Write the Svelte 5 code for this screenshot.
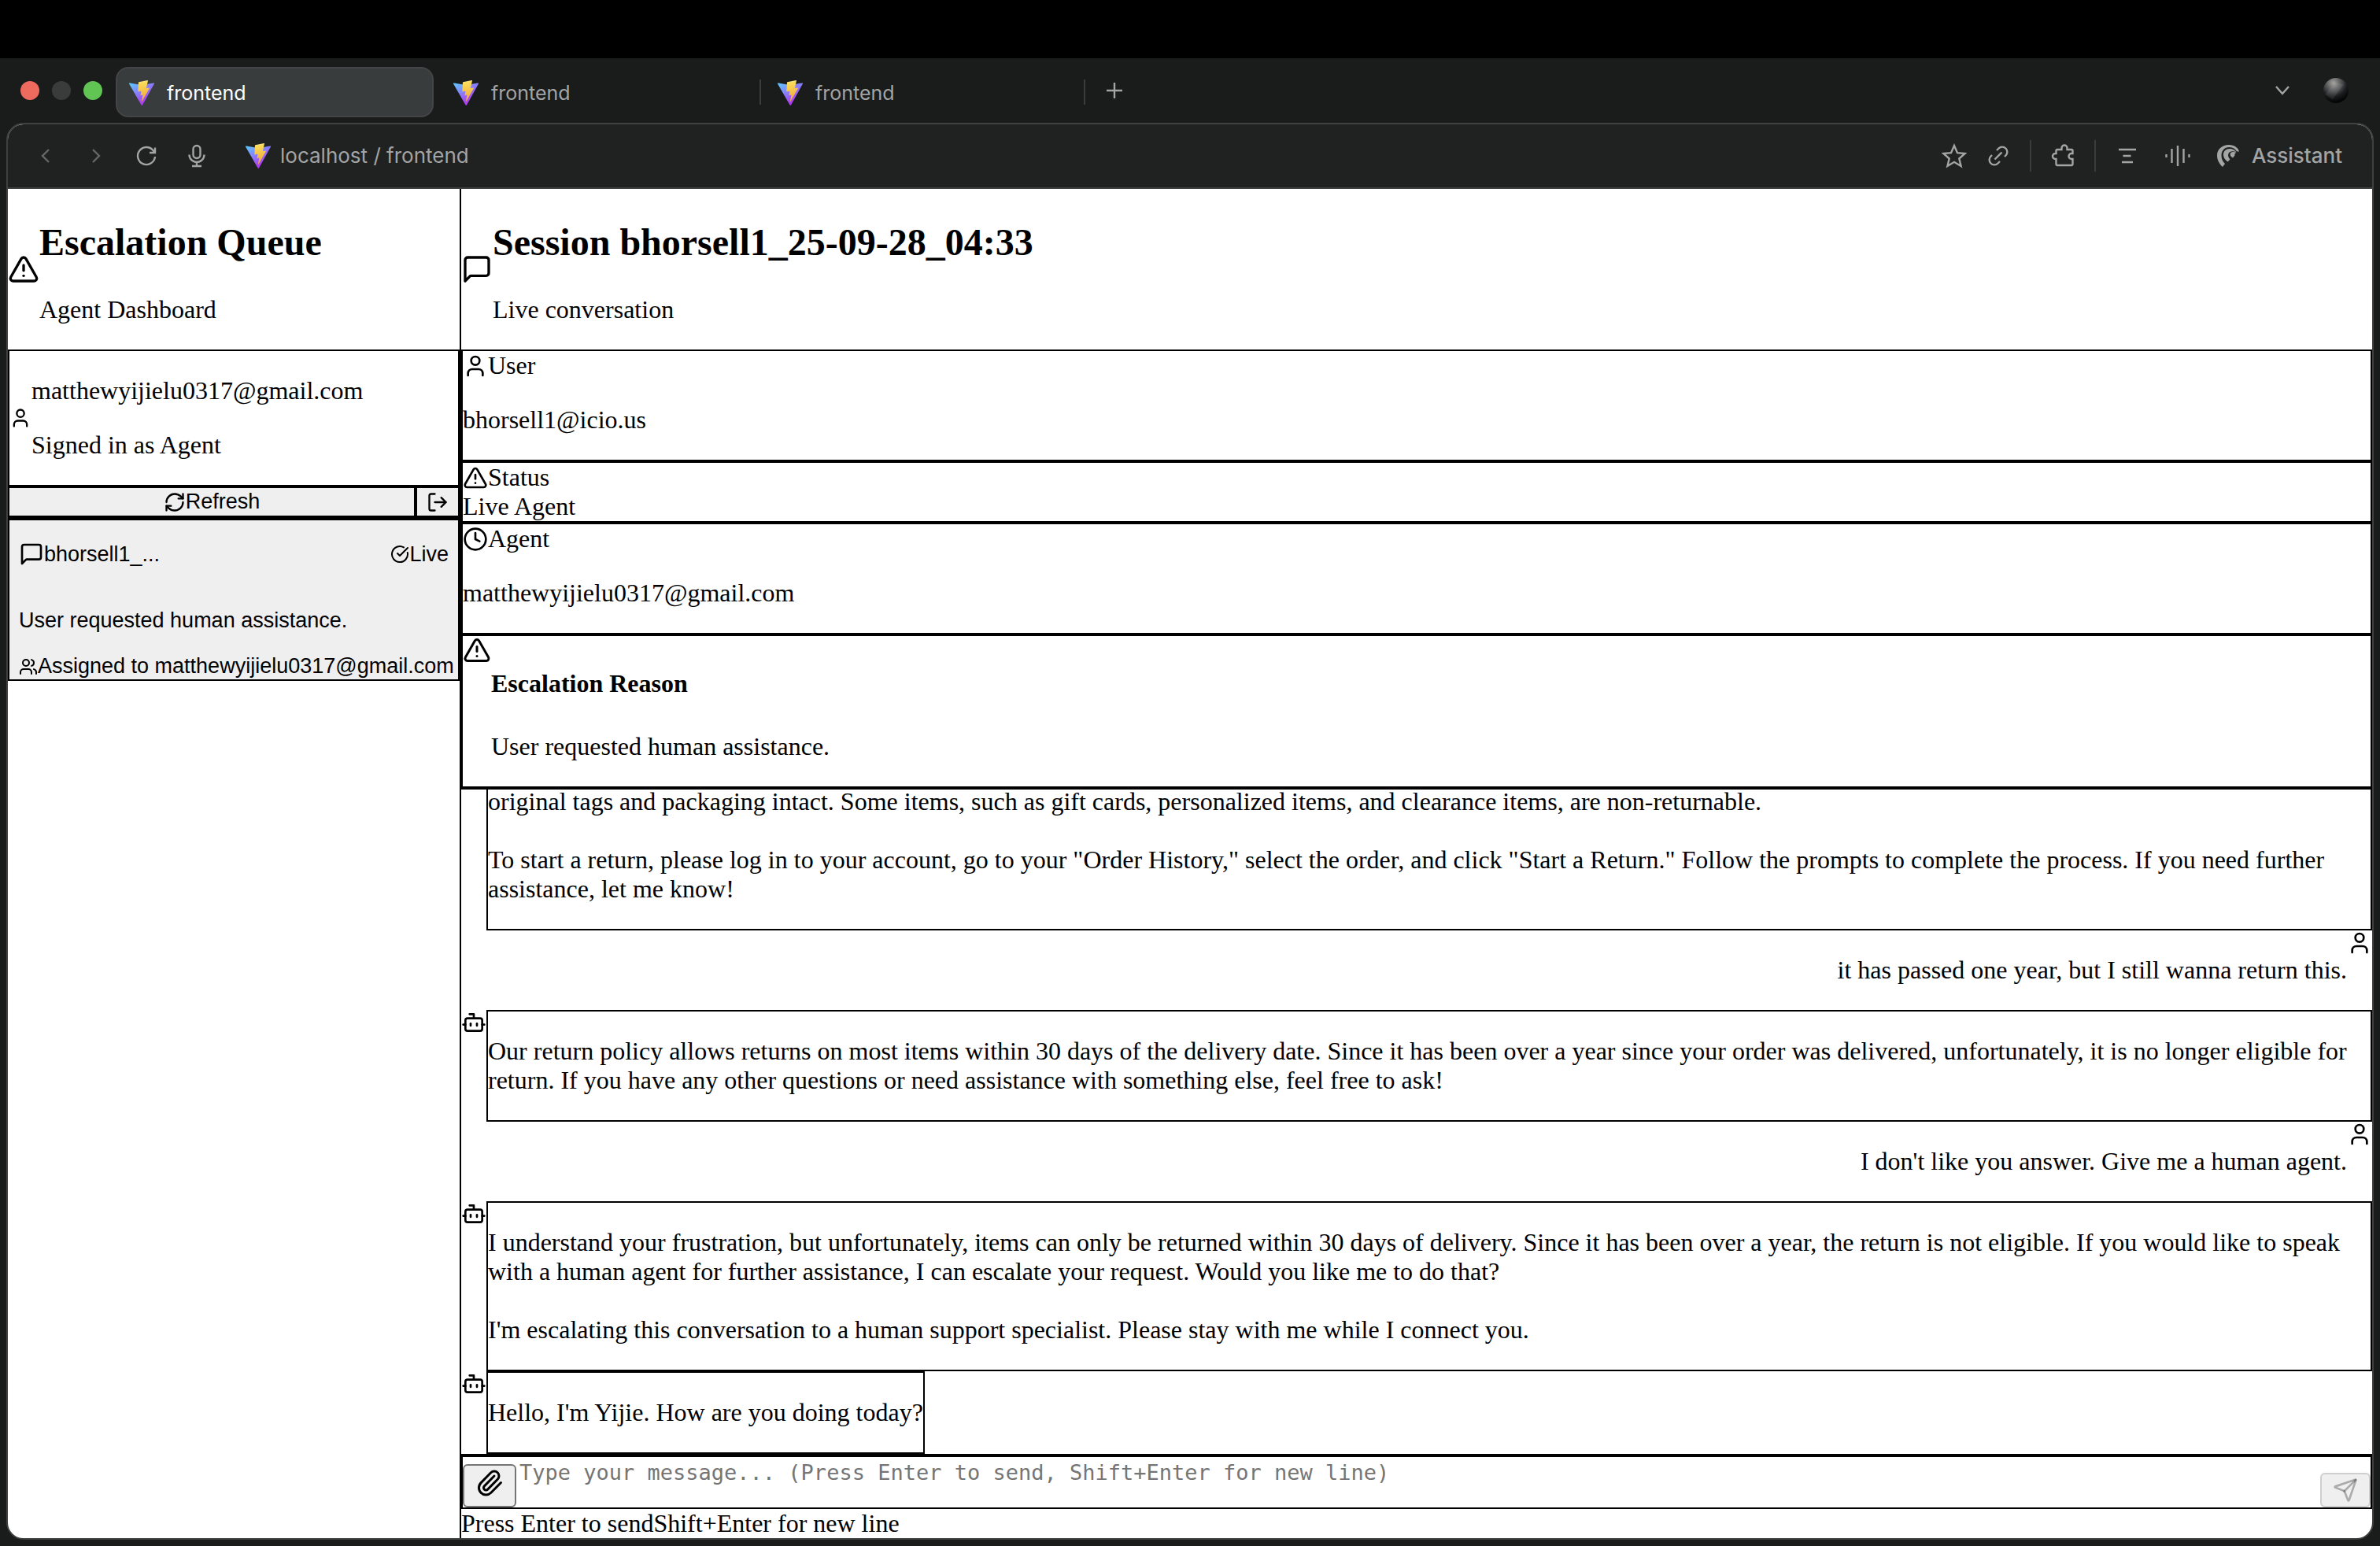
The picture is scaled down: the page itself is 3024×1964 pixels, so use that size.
<script lang="ts">
  type Message = { from: 'bot' | 'user'; text: string };

  const tabs = [
    { title: 'frontend', active: true },
    { title: 'frontend', active: false },
    { title: 'frontend', active: false }
  ];

  const messages: Message[] = [
    {
      from: 'bot',
      text: 'original tags and packaging intact. Some items, such as gift cards, personalized items, and clearance items, are non-returnable.\n\nTo start a return, please log in to your account, go to your "Order History," select the order, and click "Start a Return." Follow the prompts to complete the process. If you need further assistance, let me know!'
    },
    { from: 'user', text: 'it has passed one year, but I still wanna return this.' },
    {
      from: 'bot',
      text: 'Our return policy allows returns on most items within 30 days of the delivery date. Since it has been over a year since your order was delivered, unfortunately, it is no longer eligible for return. If you have any other questions or need assistance with something else, feel free to ask!'
    },
    { from: 'user', text: "I don't like you answer. Give me a human agent." },
    {
      from: 'bot',
      text: "I understand your frustration, but unfortunately, items can only be returned within 30 days of delivery. Since it has been over a year, the return is not eligible. If you would like to speak with a human agent for further assistance, I can escalate your request. Would you like me to do that?\n\nI'm escalating this conversation to a human support specialist. Please stay with me while I connect you."
    },
    { from: 'bot', text: "Hello, I'm Yijie. How are you doing today?" }
  ];

  const paths: Record<string, string[]> = {
    alert: ['m21.73 18-8-14a2 2 0 0 0-3.48 0l-8 14A2 2 0 0 0 4 21h16a2 2 0 0 0 1.73-3', 'M12 9v4', 'M12 17h.01'],
    message: ['M21 15a2 2 0 0 1-2 2H7l-4 4V5a2 2 0 0 1 2-2h14a2 2 0 0 1 2 2z'],
    user: ['M19 21v-2a4 4 0 0 0-4-4H9a4 4 0 0 0-4 4v2', 'M12 3a4 4 0 1 0 0 8a4 4 0 1 0 0-8'],
    refresh: ['M3 12a9 9 0 0 1 9-9 9.75 9.75 0 0 1 6.74 2.74L21 8', 'M21 3v5h-5', 'M21 12a9 9 0 0 1-9 9 9.75 9.75 0 0 1-6.74-2.74L3 16', 'M8 16H3v5'],
    logout: ['m16 17 5-5-5-5', 'M21 12H9', 'M9 21H5a2 2 0 0 1-2-2V5a2 2 0 0 1 2-2h4'],
    check: ['M21.801 10A10 10 0 1 1 17 3.335', 'm9 11 3 3L22 4'],
    users: ['M16 21v-2a4 4 0 0 0-4-4H6a4 4 0 0 0-4 4v2', 'M16 3.128a4 4 0 0 1 0 7.744', 'M22 21v-2a4 4 0 0 0-3-3.87', 'M9 3a4 4 0 1 0 0 8a4 4 0 1 0 0-8'],
    clock: ['M12 6v6l4 2', 'M12 2a10 10 0 1 0 0 20a10 10 0 1 0 0-20'],
    bot: ['M12 8V4H8', 'M6 8h12a2 2 0 0 1 2 2v8a2 2 0 0 1-2 2H6a2 2 0 0 1-2-2v-8a2 2 0 0 1 2-2z', 'M2 14h2', 'M20 14h2', 'M15 13v2', 'M9 13v2'],
    clip: ['m16 6-8.414 8.586a2 2 0 0 0 2.829 2.829l8.414-8.586a4 4 0 1 0-5.657-5.657l-8.379 8.551a6 6 0 1 0 8.485 8.485l8.379-8.551'],
    send: ['M14.536 21.686a.5.5 0 0 0 .937-.024l6.5-19a.496.496 0 0 0-.635-.635l-19 6.5a.5.5 0 0 0-.024.937l7.93 3.18a2 2 0 0 1 1.112 1.11z', 'm21.854 2.147-10.94 10.939']
  };
</script>

{#snippet icon(name: string, size: number)}
  <svg class="icon" width={size} height={size} viewBox="0 0 24 24" aria-hidden="true">
    {#each paths[name] as d}<path {d} />{/each}
  </svg>
{/snippet}

{#snippet favicon()}
  <svg class="icon" width="32" height="32" viewBox="0 0 32 32" aria-hidden="true">
    <defs>
      <linearGradient id="shield" x1="0" y1="0" x2="0.6" y2="0.9">
        <stop offset="0" stop-color="#5cccff" />
        <stop offset="1" stop-color="#b136f5" />
      </linearGradient>
      <linearGradient id="bolt" x1="0.4" y1="0" x2="0.5" y2="0.9">
        <stop offset="0" stop-color="#fbe48a" />
        <stop offset="0.15" stop-color="#f9da58" />
        <stop offset="1" stop-color="#f0aa3a" />
      </linearGradient>
    </defs>
    <path d="M31.9 4.6 17 31.4a.8.8 0 0 1-1.4 0L.1 4.6A.8.8 0 0 1 1 3.400L16 6l15-2.600a.8.8 0 0 1 .9 1.200z" fill="url(#shield)" />
    <path d="M23.400 0 12.300 2.200a.4.400 0 0 0-.3.400l-.7 11.500c0 .3.200.5.500.4l3.100-.7c.3 0 .5.200.5.500l-.9 4.500c-.1.300.2.500.5.400l1.900-.6c.3 0 .5.200.5.500l-1.500 7.100c0 .5.500.7.700.3L26 10c.2-.3-.1-.7-.4-.6l-3.200.6c-.3 0-.5-.2-.4-.5l2-8.900c0-.4-.2-.7-.6-.6z" fill="url(#bolt)" />
  </svg>
{/snippet}

<div class="screen">
  <div class="notch"></div>

  <header class="tabbar">
    <div class="lights">
      <span class="light red"></span>
      <span class="light off"></span>
      <span class="light green"></span>
    </div>
    <nav class="tabs" aria-label="Tabs">
      {#each tabs as tab}
        <button class="tab" class:active={tab.active}>{@render favicon()}<span>{tab.title}</span></button>
      {/each}
    </nav>
    <button class="tool plus" aria-label="New tab">
      <svg class="icon" width="22" height="22" viewBox="0 0 22 22"><path d="M11 1v20M1 11h20" /></svg>
    </button>
    <button class="tool more" aria-label="Search tabs">
      <svg class="icon" width="20" height="14" viewBox="0 0 20 14"><path d="m2 2 8 9 8-9" /></svg>
    </button>
    <svg class="orb" width="32" height="32" viewBox="0 0 32 32" role="img" aria-label="Profile">
      <defs>
        <radialGradient id="orb" cx="0.4" cy="0.2" r="0.75">
          <stop offset="0" stop-color="#a5a39f" />
          <stop offset="0.35" stop-color="#5e5f60" />
          <stop offset="0.7" stop-color="#1d1e20" />
          <stop offset="1" stop-color="#050506" />
        </radialGradient>
      </defs>
      <circle cx="16" cy="16" r="16" fill="url(#orb)" />
      <path d="M2 21 15 6l11 2-14 19z" fill="#fff" opacity="0.08" />
    </svg>
  </header>

  <div class="window">
    <div class="toolbar">
      <button class="tool dim" aria-label="Back"><svg class="icon" width="32" height="32" viewBox="0 0 32 32"><path d="m20 8-8 8 8 8" /></svg></button>
      <button class="tool dim" aria-label="Forward"><svg class="icon" width="32" height="32" viewBox="0 0 32 32"><path d="m12 8 8 8-8 8" /></svg></button>
      <button class="tool" aria-label="Reload"><svg class="icon" width="32" height="32" viewBox="0 0 32 32"><path d="M27 17A11 11 0 1 1 24.500 9L27 12M27 5.500V12h-7" /></svg></button>
      <button class="tool" aria-label="Voice search"><svg class="icon" width="32" height="32" viewBox="0 0 32 32"><rect x="11.500" y="3" width="9" height="16" rx="4.500" /><path d="M6.500 14.500a9.500 9.500 0 0 0 19 0M16 24v5M10 29h12" /></svg></button>
      <a class="address" href="#frontend">{@render favicon()}<span>localhost / frontend</span></a>

      <div class="actions">
        <button class="tool" aria-label="Bookmark"><svg class="icon" width="32" height="32" viewBox="0 0 32 32"><path d="m16 3 4 9.200 9.700.8-7.400 6.500 2.300 9.500-8.600-5.200L7.400 29l2.300-9.500L2.300 13l9.700-.8z" /></svg></button>
        <button class="tool" aria-label="Copy link"><svg class="icon" width="32" height="32" viewBox="0 0 32 32"><path d="m11.500 20.500 9-9M14 9l2.500-2.500a6.200 6.200 0 0 1 9 9L24 17M18 23l-2.500 2.500a6.200 6.200 0 0 1-9-9L8 15" /></svg></button>
        <span class="rule"></span>
        <button class="tool" aria-label="Extensions"><svg class="icon" width="32" height="32" viewBox="0 0 32 32"><path d="M9 8h5.500V6a3.500 3.500 0 0 1 7 0v2H27a1.500 1.500 0 0 1 1.500 1.500V13H27a3.500 3.500 0 0 0 0 7h1.500v6.500A1.500 1.500 0 0 1 27 28H9a1.500 1.500 0 0 1-1.500-1.500V20H6.500a3.500 3.500 0 0 1 0-7h1V9.500A1.500 1.500 0 0 1 9 8z" /></svg></button>
        <span class="rule"></span>
        <div class="modes">
          <button class="tool" aria-label="Summarize"><svg class="icon" width="32" height="32" viewBox="0 0 32 32"><path d="M5 8h22M10.500 16h10M9 24h14" /></svg></button>
          <button class="tool" aria-label="Voice mode"><svg class="icon" width="32" height="32" viewBox="0 0 32 32"><path d="M1.500 14v4M8.500 7v18M16 3v26M23.500 7v18M30.500 14v4" /></svg></button>
          <button class="tool assistant"><svg class="icon" width="32" height="32" viewBox="0 0 32 32"><path class="solid" d="M9 30C4.500 26 2 21 2 15.500 2 7.500 8.500 2 17 2c7 0 12.500 4 13 9-1-.8-1.800-.8-2.500-.3C25 7 21.500 4.600 17 5 10.500 5.500 7.500 10 7.500 15.500c0 4 1.500 7.500 4.500 10.500z" /><path class="solid" d="M15.500 23.500C12 21 10 18 10 14.500 10 9.500 14 6.500 19 7c3.500.3 6 2 7.500 4.500-4.500-2-8.500-1.500-10 1.500-1.200 2.500 0 5.500 2 7.500z" /><path class="solid" d="M22 18.500c-3-1.500-4-3.800-3-6 1.500-2 5-2 7.500-.5-2 .5-2.500 2-2 3.500z" /></svg><span>Assistant</span></button>
        </div>
      </div>
    </div>

    <main class="page">
      <aside class="sidebar">
        <div class="heading">
          {@render icon('alert', 40)}
          <div><h2>Escalation Queue</h2><p>Agent Dashboard</p></div>
        </div>
        <div class="box account">
          {@render icon('user', 28)}
          <div><p>matthewyijielu0317@gmail.com</p><p>Signed in as Agent</p></div>
        </div>
        <div class="controls">
          <button class="flat grow">{@render icon('refresh', 28)}Refresh</button>
          <button class="flat exit" aria-label="Sign out">{@render icon('logout', 28)}</button>
        </div>
        <button class="flat card">
          <span class="cardhead">
            <span class="pair">{@render icon('message', 32)}bhorsell1_...</span>
            <span class="pair">{@render icon('check', 24)}Live</span>
          </span>
          <span class="reason">User requested human assistance.</span>
          <span class="pair">{@render icon('users', 24)}Assigned to matthewyijielu0317@gmail.com</span>
        </button>
      </aside>

      <section class="session">
        <div class="heading">
          {@render icon('message', 40)}
          <div><h2>Session bhorsell1_25-09-28_04:33</h2><p>Live conversation</p></div>
        </div>
        <div class="box">
          <div class="pair">{@render icon('user', 32)}<span>User</span></div>
          <p>bhorsell1@icio.us</p>
        </div>
        <div class="box">
          <div class="pair">{@render icon('alert', 32)}<span>Status</span></div>
          <div>Live Agent</div>
        </div>
        <div class="box">
          <div class="pair">{@render icon('clock', 32)}<span>Agent</span></div>
          <p>matthewyijielu0317@gmail.com</p>
        </div>
        <div class="box escalation">
          {@render icon('alert', 36)}
          <div><h4>Escalation Reason</h4><p>User requested human assistance.</p></div>
        </div>

        <div class="messages">
          {#each messages as m}
            <div class="message {m.from}">
              {@render icon(m.from, 32)}
              <div class="bubble"><p>{m.text}</p></div>
            </div>
          {/each}
        </div>

        <form class="composer">
          <button type="button" class="attach" aria-label="Attach file">{@render icon('clip', 36)}</button>
          <textarea rows="1" aria-label="Message" placeholder="Type your message... (Press Enter to send, Shift+Enter for new line)"></textarea>
          <button type="submit" class="send" aria-label="Send" disabled>{@render icon('send', 32)}</button>
        </form>
        <div class="hint"><span>Press Enter to send</span><span>Shift+Enter for new line</span></div>
      </section>
    </main>
  </div>
</div>

<style>
  :global(body) {
    margin: 0;
    background: #000;
  }

  .screen {
    box-sizing: border-box;
    height: 100vh;
    display: flex;
    flex-direction: column;
    background: #1a1c1b;
    font-family: 'Liberation Serif', 'Times New Roman', serif;
    font-size: 32px;
    line-height: 37px;
    color: #000;
  }

  button {
    margin: 0;
    padding: 0;
    border: 0;
    background: none;
    color: inherit;
    font: inherit;
  }

  .icon {
    display: block;
    flex: none;
    fill: none;
    stroke: currentColor;
    stroke-width: 2;
    stroke-linecap: round;
    stroke-linejoin: round;
  }

  .tool .icon {
    stroke-width: 2.4;
    stroke-linecap: butt;
    stroke-linejoin: miter;
  }

  .icon path[fill],
  .icon .solid {
    stroke: none;
  }

  .icon .solid {
    fill: currentColor;
  }

  /* Browser chrome */
  .notch {
    flex: none;
    height: 74px;
    background: #000;
  }

  .tabbar,
  .toolbar {
    flex: none;
    display: flex;
    align-items: center;
    font-family: Inter, 'Liberation Sans', sans-serif;
    font-size: 26px;
    line-height: 32px;
    color: #a3a4a4;
  }

  .tabbar {
    height: 82px;
    padding: 0 40px 0 26px;
  }

  .lights {
    display: flex;
    gap: 16px;
    margin-right: 17px;
  }

  .light {
    width: 24px;
    height: 24px;
    border-radius: 50%;
  }

  .red {
    background: #ed6a5e;
  }

  .off {
    background: #3a3b3b;
  }

  .green {
    background: #61c554;
  }

  .tabs {
    display: flex;
    gap: 8px;
    padding-top: 4px;
  }

  .tab {
    box-sizing: border-box;
    position: relative;
    display: flex;
    align-items: center;
    gap: 16px;
    width: 404px;
    height: 64px;
    padding: 2px 15px 0;
    border: 2px solid transparent;
    border-radius: 16px;
    font-size: 25px;
  }

  .tab.active {
    background: #393c3d;
    border-color: #434546;
    color: #fff;
  }

  .tab:not(.active)::after {
    content: '';
    position: absolute;
    right: -6px;
    top: 14px;
    width: 2px;
    height: 32px;
    background: #3a3c3c;
  }

  .tool {
    display: flex;
    align-items: center;
  }

  .plus {
    margin-left: 30px;
  }

  .more {
    margin-left: auto;
  }

  .orb {
    margin-left: 42px;
  }

  .window {
    flex: 1;
    min-height: 0;
    display: flex;
    flex-direction: column;
    margin: 0 8px 8px;
    border: 2px solid #3f4141;
    border-radius: 22px;
    background: #fff;
    overflow: hidden;
  }

  .toolbar {
    gap: 32px;
    height: 80px;
    padding: 0 38px 0 32px;
    background: #202221;
    border-bottom: 2px solid #3f4141;
  }

  .dim {
    color: #666868;
  }

  .address {
    display: flex;
    align-items: center;
    gap: 12px;
    margin-left: 14px;
    color: inherit;
    text-decoration: none;
  }

  .actions {
    display: flex;
    align-items: center;
    gap: 24px;
    margin-left: auto;
  }

  .modes {
    display: flex;
    align-items: center;
    gap: 32px;
  }

  .rule {
    width: 2px;
    height: 40px;
    background: #3a3c3c;
  }

  .assistant {
    gap: 14px;
    font-weight: 500;
  }

  /* Agent dashboard */
  .page {
    flex: 1;
    min-height: 0;
    display: flex;
  }

  .sidebar {
    flex: none;
    box-sizing: border-box;
    width: 576px;
    border-right: 2px solid #000;
  }

  .session {
    flex: 1;
    min-width: 0;
    display: flex;
    flex-direction: column;
  }

  h2 {
    margin: 40px 0;
    font-size: 48px;
    line-height: 55px;
  }

  h4 {
    margin: 42px 0 43px;
    font-size: 32px;
  }

  p {
    margin: 32px 0;
  }

  .heading,
  .account {
    display: flex;
    align-items: center;
  }

  .heading p {
    margin-top: 0;
  }

  .account p + p {
    margin-top: 0;
  }

  .box {
    border: 2px solid #000;
  }

  .pair {
    display: flex;
    align-items: center;
  }

  .escalation {
    display: flex;
    align-items: flex-start;
  }

  .escalation p {
    margin-top: 0;
  }

  .controls {
    display: flex;
  }

  .flat {
    box-sizing: border-box;
    border: 2px solid #000;
    background: #efefef;
    font-family: 'Liberation Sans', Arial, sans-serif;
    font-size: 27px;
    line-height: 31px;
  }

  .grow,
  .exit {
    display: flex;
    align-items: center;
    justify-content: center;
    padding: 2px 12px;
  }

  .grow {
    flex: 1;
  }

  .exit {
    width: 56px;
  }

  .card {
    display: block;
    width: 100%;
    padding: 1px 12px;
    border-top-width: 4px;
    text-align: left;
    white-space: nowrap;
  }

  .cardhead {
    display: flex;
    align-items: center;
    justify-content: space-between;
    height: 84px;
  }

  .reason {
    display: block;
    margin: 27px 0;
  }

  .messages {
    flex: 1;
    min-height: 0;
    display: flex;
    flex-direction: column;
    justify-content: flex-end;
    overflow: hidden;
    border-top: 2px solid #000;
    border-bottom: 2px solid #000;
  }

  .message {
    flex: none;
    display: flex;
    align-items: flex-start;
  }

  .message.user {
    flex-direction: row-reverse;
  }

  .bubble {
    display: flow-root;
    white-space: pre-wrap;
  }

  .bot .bubble {
    border: 2px solid #000;
  }

  .composer {
    display: flex;
    align-items: flex-end;
    height: 64px;
    border: 2px solid #000;
  }

  .attach,
  .send {
    flex: none;
    box-sizing: border-box;
    display: flex;
    justify-content: center;
    border: 2px solid #767676;
    border-radius: 6px;
    background: #efefef;
  }

  .attach {
    width: 68px;
    height: 55px;
    padding-top: 4px;
  }

  .send {
    width: 64px;
    height: 44px;
    padding-top: 4px;
    border-color: #cfcfcf;
    color: rgba(16, 16, 16, 0.3);
  }

  textarea {
    flex: 1;
    align-self: stretch;
    box-sizing: border-box;
    min-width: 0;
    margin: 0;
    padding: 4px;
    border: 0;
    outline: 0;
    resize: none;
    overflow: hidden;
    background: transparent;
    color: #000;
    font-family: 'DejaVu Sans Mono', monospace;
    font-size: 27px;
    line-height: 31px;
  }

  textarea::placeholder {
    color: #757575;
    opacity: 1;
  }

  .hint {
    display: flex;
  }
</style>
